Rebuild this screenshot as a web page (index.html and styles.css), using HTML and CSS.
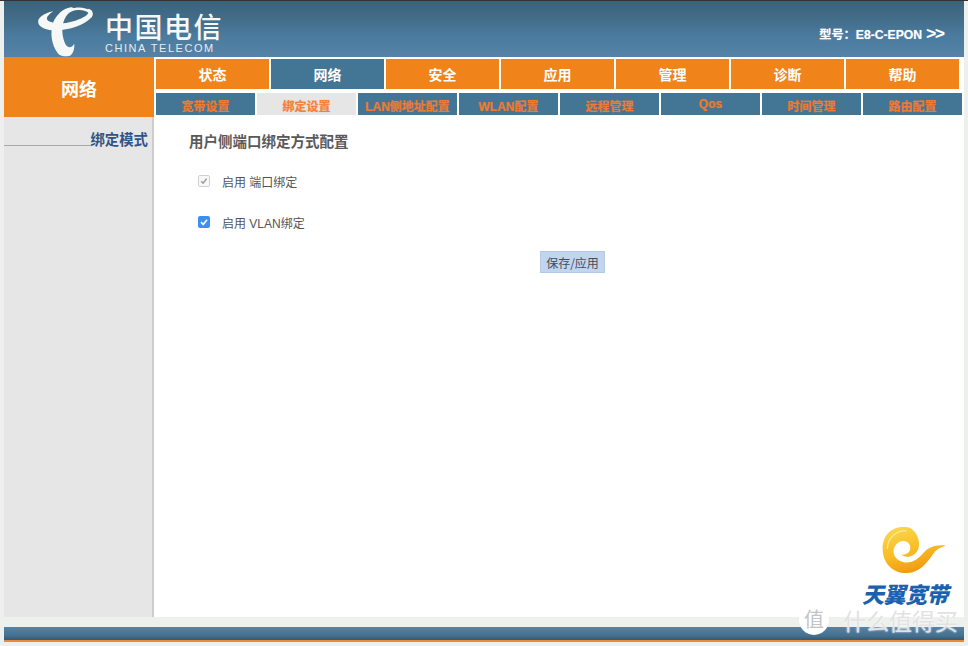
FILE: index.html
```html
<!DOCTYPE html>
<html lang="zh">
<head>
<meta charset="utf-8">
<title>绑定设置</title>
<link rel="stylesheet" href="styles.css">
</head>
<body>
<div class="page">
  <header class="header">
    <div class="brand">
      <svg class="brand-icon" viewBox="0 0 240 174" preserveAspectRatio="none" aria-hidden="true">
        <g fill="#f6f8f6">
          <path d="M78 28C50 34 32 48 35 62C38 80 70 88 100 84C140 80 178 62 189 42C194 30 188 22 176 20C182 28 178 38 165 45C140 60 105 68 78 62C58 58 50 48 78 28Z"/>
          <path d="M128 16C105 20 88 38 78 60C68 90 72 130 92 155C100 164 120 165 128 160C136 150 139 140 138 125C130 140 118 138 112 125C103 105 100 75 110 52C116 38 125 28 140 22C134 16 130 16 128 16Z"/>
          <path d="M105 35C125 14 165 10 186 28C192 36 190 44 186 48C188 34 170 22 148 24C130 26 118 34 110 45Z"/>
        </g>
      </svg>
      <div class="brand-text">
        <div class="brand-cn">中国电信</div>
        <div class="brand-en">CHINA TELECOM</div>
      </div>
    </div>
    <div class="model">型号：<span class="model-name">E8-C-EPON</span><span class="model-arrows">&gt;&gt;</span></div>
  </header>

  <div class="nav-row">
    <div class="section-title">网络</div>
    <nav class="nav">
      <div class="main-tabs">
        <a class="main-tab">状态</a>
        <a class="main-tab active">网络</a>
        <a class="main-tab">安全</a>
        <a class="main-tab">应用</a>
        <a class="main-tab">管理</a>
        <a class="main-tab">诊断</a>
        <a class="main-tab">帮助</a>
      </div>
      <div class="sub-tabs">
        <a class="sub-tab">宽带设置</a>
        <a class="sub-tab active">绑定设置</a>
        <a class="sub-tab">LAN侧地址配置</a>
        <a class="sub-tab">WLAN配置</a>
        <a class="sub-tab">远程管理</a>
        <a class="sub-tab qos">Qos</a>
        <a class="sub-tab">时间管理</a>
        <a class="sub-tab">路由配置</a>
      </div>
    </nav>
  </div>

  <div class="body-row">
    <aside class="sidebar">
      <div class="side-item">绑定模式</div>
    </aside>
    <main class="content">
      <h1 class="title">用户侧端口绑定方式配置</h1>
      <label class="check-row first"><input class="check" type="checkbox" checked disabled><span>启用 端口绑定</span></label>
      <label class="check-row second"><input class="check" type="checkbox" checked><span>启用 VLAN绑定</span></label>
      <div class="actions"><button class="save" type="button">保存/应用</button></div>
      <div class="tianyi">
        <svg class="tianyi-icon" viewBox="0 0 270 192" aria-hidden="true">
          <defs>
            <linearGradient id="swirl" x1="0.2" y1="0" x2="0.6" y2="1">
              <stop offset="0" stop-color="#fbd64e"/>
              <stop offset="0.55" stop-color="#f8bb22"/>
              <stop offset="1" stop-color="#ef9510"/>
            </linearGradient>
          </defs>
          <path fill="url(#swirl)" d="M105 12C65 8 36 38 38 80C40 125 72 152 112 150C150 148 172 118 190 92C200 78 212 72 228 68C200 64 176 72 160 90C146 106 128 122 102 118C80 114 66 96 72 76C78 58 96 50 110 56C122 62 124 78 116 88C110 95 100 97 92 94C108 108 134 100 144 80C156 52 134 10 105 12Z"/>
          <path fill="none" stroke="#fdeb9a" stroke-width="4" d="M110 24C80 20 52 45 52 78"/>
        </svg>
        <div class="tianyi-text">天翼宽带</div>
      </div>
    </main>
  </div>

  <footer class="footer"></footer>

  <div class="watermark">
    <span class="wm-badge">值</span>
    <span class="wm-text">什么值得买</span>
  </div>
</div>
</body>
</html>
```
FILE: styles.css
```css
* { box-sizing: border-box; }
html, body { margin: 0; padding: 0; height: 100%; }
body {
  background: #eef0ee;
  font-family: "Liberation Sans", "Noto Sans CJK SC", sans-serif;
  overflow: hidden;
}
.page {
  position: relative;
  width: 968px;
  height: 646px;
  padding: 0 4px;
  border-top: 1px solid #333;
  display: flex;
  flex-direction: column;
}
.header {
  height: 56px;
  flex: none;
  display: flex;
  justify-content: space-between;
  align-items: flex-start;
  background: linear-gradient(#3a6279 0, #44708e 22px, #4a7a9d 34px, #5583a8 56px);
  color: #fff;
  padding-left: 22px;
}
.brand { display: flex; align-items: flex-start; padding-top: 1px; }
.brand-icon { width: 84px; height: 58px; flex: none; display: block; }
.brand-text { margin-left: -5px; margin-top: 8px; width: 120px; }
.brand-cn {
  font-family: "Noto Sans CJK SC", sans-serif;
  font-weight: 500;
  font-size: 28px;
  line-height: 33px;
  letter-spacing: 1.5px;
  color: #f6f8f6;
  height: 33px;
}
.brand-en {
  font-size: 11px;
  line-height: 11px;
  letter-spacing: 1.55px;
  color: #e6edf0;
  white-space: nowrap;
}
.model {
  margin: 26px 20px 0 0;
  font-size: 12.2px;
  line-height: 16px;
  font-weight: 700;
  display: flex;
  align-items: center;
  text-shadow: 0 0 1px rgba(255, 255, 255, 0.5);
}
.model-arrows { font-size: 17px; margin-left: 4px; margin-top: -3px; letter-spacing: -1px; }
.nav-row { display: flex; height: 60px; flex: none; background: #fff; }
.section-title {
  width: 150px;
  flex: none;
  background: #f0831a;
  color: #fff;
  font-family: "Noto Sans CJK SC", sans-serif;
  font-weight: 700;
  font-size: 18px;
  display: flex;
  justify-content: center;
  align-items: center;
  padding-top: 2px;
}
.nav { flex: 1; padding: 2px; }
.main-tabs { display: flex; gap: 2px; height: 30px; }
.main-tab {
  width: 113px;
  background: #f0831a;
  color: #fff;
  font-family: "Noto Sans CJK SC", sans-serif;
  font-weight: 700;
  font-size: 14px;
  display: flex;
  justify-content: center;
  align-items: center;
}
.main-tab.active { background: #437595; }
.sub-tabs { display: flex; gap: 2px; height: 22px; margin-top: 4px; }
.sub-tab {
  width: 99px;
  background: #437595;
  color: #ee7a33;
  font-weight: 700;
  font-size: 12px;
  display: flex;
  justify-content: center;
  align-items: center;
  padding-top: 3px;
  white-space: nowrap;
  text-shadow: 0 0 1px rgba(238, 122, 51, 0.6);
}
.sub-tab.active { background: #e6e6e6; color: #f4813a; }
.sub-tab.qos { padding-top: 0; padding-bottom: 1px; }
.body-row { display: flex; height: 500px; flex: none; }
.sidebar {
  width: 150px;
  flex: none;
  background: #e6e6e6;
  border-right: 2px solid #cdcdcd;
  padding-top: 13px;
}
.side-item {
  font-family: "Noto Sans CJK SC", sans-serif;
  font-weight: 700;
  font-size: 14.4px;
  line-height: 18px;
  color: #2f5588;
  text-align: right;
  padding-right: 4px;
  background: linear-gradient(#a9a9a9, #a9a9a9) left 15px / 87px 1px no-repeat;
}
.content {
  flex: 1;
  background: #fff;
  padding: 15px 0 0 35px;
  display: flex;
  flex-direction: column;
  color: #555;
}
.title {
  margin: 0;
  font-family: "Noto Sans CJK SC", sans-serif;
  font-weight: 700;
  font-size: 14.5px;
  line-height: 18px;
  color: #595959;
}
.check-row {
  display: flex;
  align-items: center;
  height: 18px;
  font-family: "Liberation Sans", "Noto Sans CJK SC", sans-serif;
  font-size: 12px;
  color: #555;
  padding-left: 9px;
}
.check-row.first { margin-top: 22px; }
.check-row.second { margin-top: 23px; }
.check {
  appearance: none;
  margin: 0 12px 0 0;
  width: 12px;
  height: 12px;
  border-radius: 2px;
  background: #3b8ff0 url("data:image/svg+xml,%3Csvg xmlns='http://www.w3.org/2000/svg' viewBox='0 0 12 12'%3E%3Cpath d='M3 6.2l2.2 2.3L9 3.7' fill='none' stroke='%23fff' stroke-width='1.7'/%3E%3C/svg%3E") center / 12px 12px no-repeat;
}
.check:disabled {
  border: 1px solid #d0d0d0;
  background: #f8f8f8 url("data:image/svg+xml,%3Csvg xmlns='http://www.w3.org/2000/svg' viewBox='0 0 10 10'%3E%3Cpath d='M2.2 5.2l1.9 2L7.6 2.8' fill='none' stroke='%23999' stroke-width='1.4'/%3E%3C/svg%3E") center / 10px 10px no-repeat;
}
.actions { margin-top: 20px; padding-left: 351px; }
.save {
  width: 65px;
  height: 22px;
  padding: 0;
  background: #c2d5ef;
  border: 1px solid #b4c9e6;
  color: #444c5c;
  font-family: "Noto Sans CJK SC", sans-serif;
  font-size: 12px;
  display: block;
}
.tianyi {
  margin-top: auto;
  align-self: flex-end;
  margin-right: 4px;
  margin-bottom: 13px;
  display: flex;
  flex-direction: column;
  align-items: flex-end;
}
.tianyi-icon { width: 90px; height: 64px; display: block; }
.tianyi-text {
  font-family: "Noto Sans CJK SC", sans-serif;
  font-weight: 900;
  font-style: italic;
  font-size: 22px;
  line-height: 22px;
  letter-spacing: -0.5px;
  margin-top: -5px;
  margin-right: 12px;
  color: #1a62ae;
}
.footer {
  flex: none;
  height: 15px;
  margin-top: 10px;
  background: linear-gradient(#5583a8 0, #44708e 9px, #375c78 12px, #375c78 13px, #ea8a3a 13px);
}
.watermark {
  position: absolute;
  left: 799px;
  top: 604px;
  height: 30px;
  display: flex;
  align-items: center;
  gap: 14px;
  pointer-events: none;
}
.wm-badge {
  width: 30px;
  height: 30px;
  border-radius: 50%;
  background: #fff;
  color: #c4c4c4;
  font-family: "Noto Sans CJK SC", sans-serif;
  font-size: 20px;
  line-height: 28px;
  text-align: center;
}
.wm-text {
  font-family: "Noto Sans CJK SC", sans-serif;
  font-size: 23px;
  line-height: 24px;
  color: #e2e2e2;
  text-shadow: 0 0 2px #fff;
  white-space: nowrap;
}
```
